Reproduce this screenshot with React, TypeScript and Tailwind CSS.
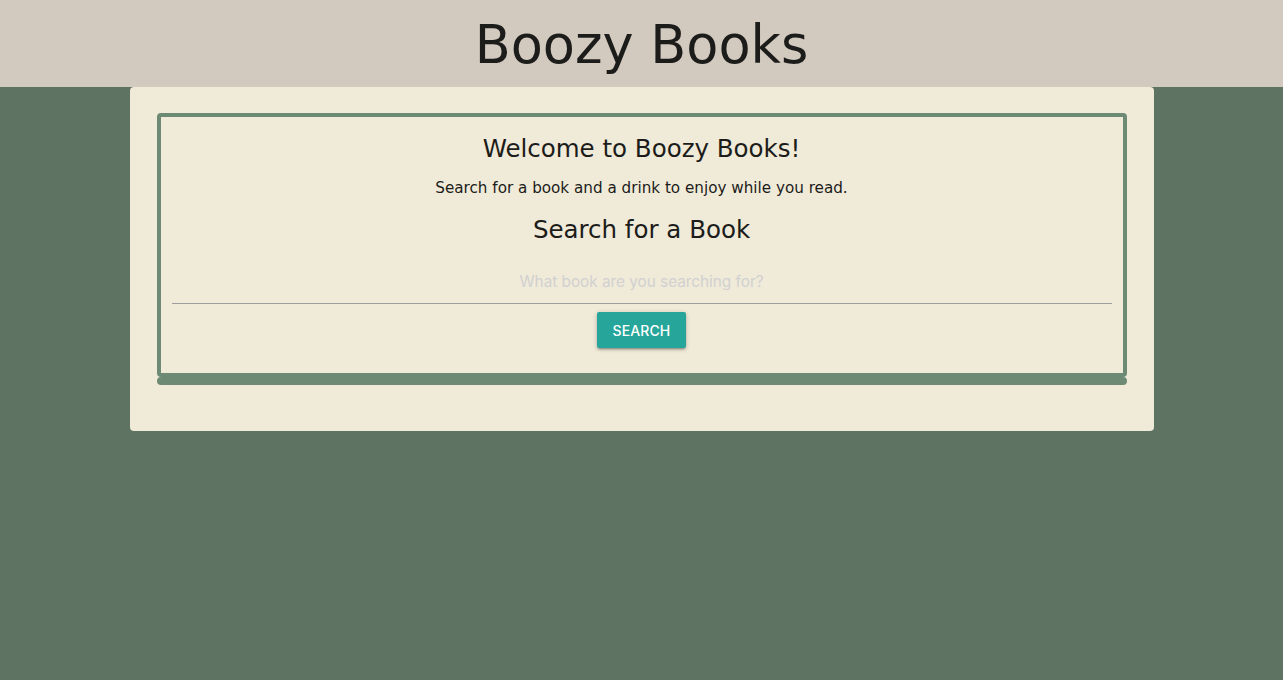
export default function App() {
  return (
    <div className="min-h-screen bg-[#5f7363] font-['DejaVu_Sans',Verdana,sans-serif] text-[#1c1c1a]">
      <header className="h-[87px] bg-[#d2c9bf] flex items-center justify-center">
        <h1 className="text-[52.5px] leading-[60px] pt-[2px]">Boozy Books</h1>
      </header>

      <main className="w-[1024px] mx-auto bg-[#f0ead8] rounded-[4px] px-[27px] pt-[26px] pb-[46px]">
        <section className="border-4 border-[#6d8b74] rounded-[4px] px-[11px] pb-[25px] flex flex-col items-center text-center">
          <h2 className="mt-[18px] text-[24.5px] leading-[28px]">Welcome to Boozy Books!</h2>
          <p className="mt-[15px] text-[15.2px] leading-[20px]">
            Search for a book and a drink to enjoy while you read.
          </p>
          <h3 className="mt-[18px] text-[24.5px] leading-[28px]">Search for a Book</h3>

          <input
            type="text"
            placeholder="What book are you searching for?"
            className="mt-[12px] w-full h-[48px] pt-[4px] bg-transparent border-b border-[#9e9e9e] text-center text-[15.3px] font-['Inter',sans-serif] placeholder:text-[#d1d1d1] focus:outline-none"
          />

          <button className="mt-[8px] h-[36px] px-[16px] rounded-[2px] bg-[#26a69a] text-white text-[14px] font-medium tracking-[0.1px] uppercase font-['Inter',sans-serif] shadow-[0_2px_2px_0_rgba(0,0,0,0.14),0_3px_1px_-2px_rgba(0,0,0,0.12),0_1px_5px_0_rgba(0,0,0,0.2)]">
            Search
          </button>
        </section>
        <div className="h-[8px] bg-[#6d8b74] rounded-[4px]" />
      </main>
    </div>
  );
}
